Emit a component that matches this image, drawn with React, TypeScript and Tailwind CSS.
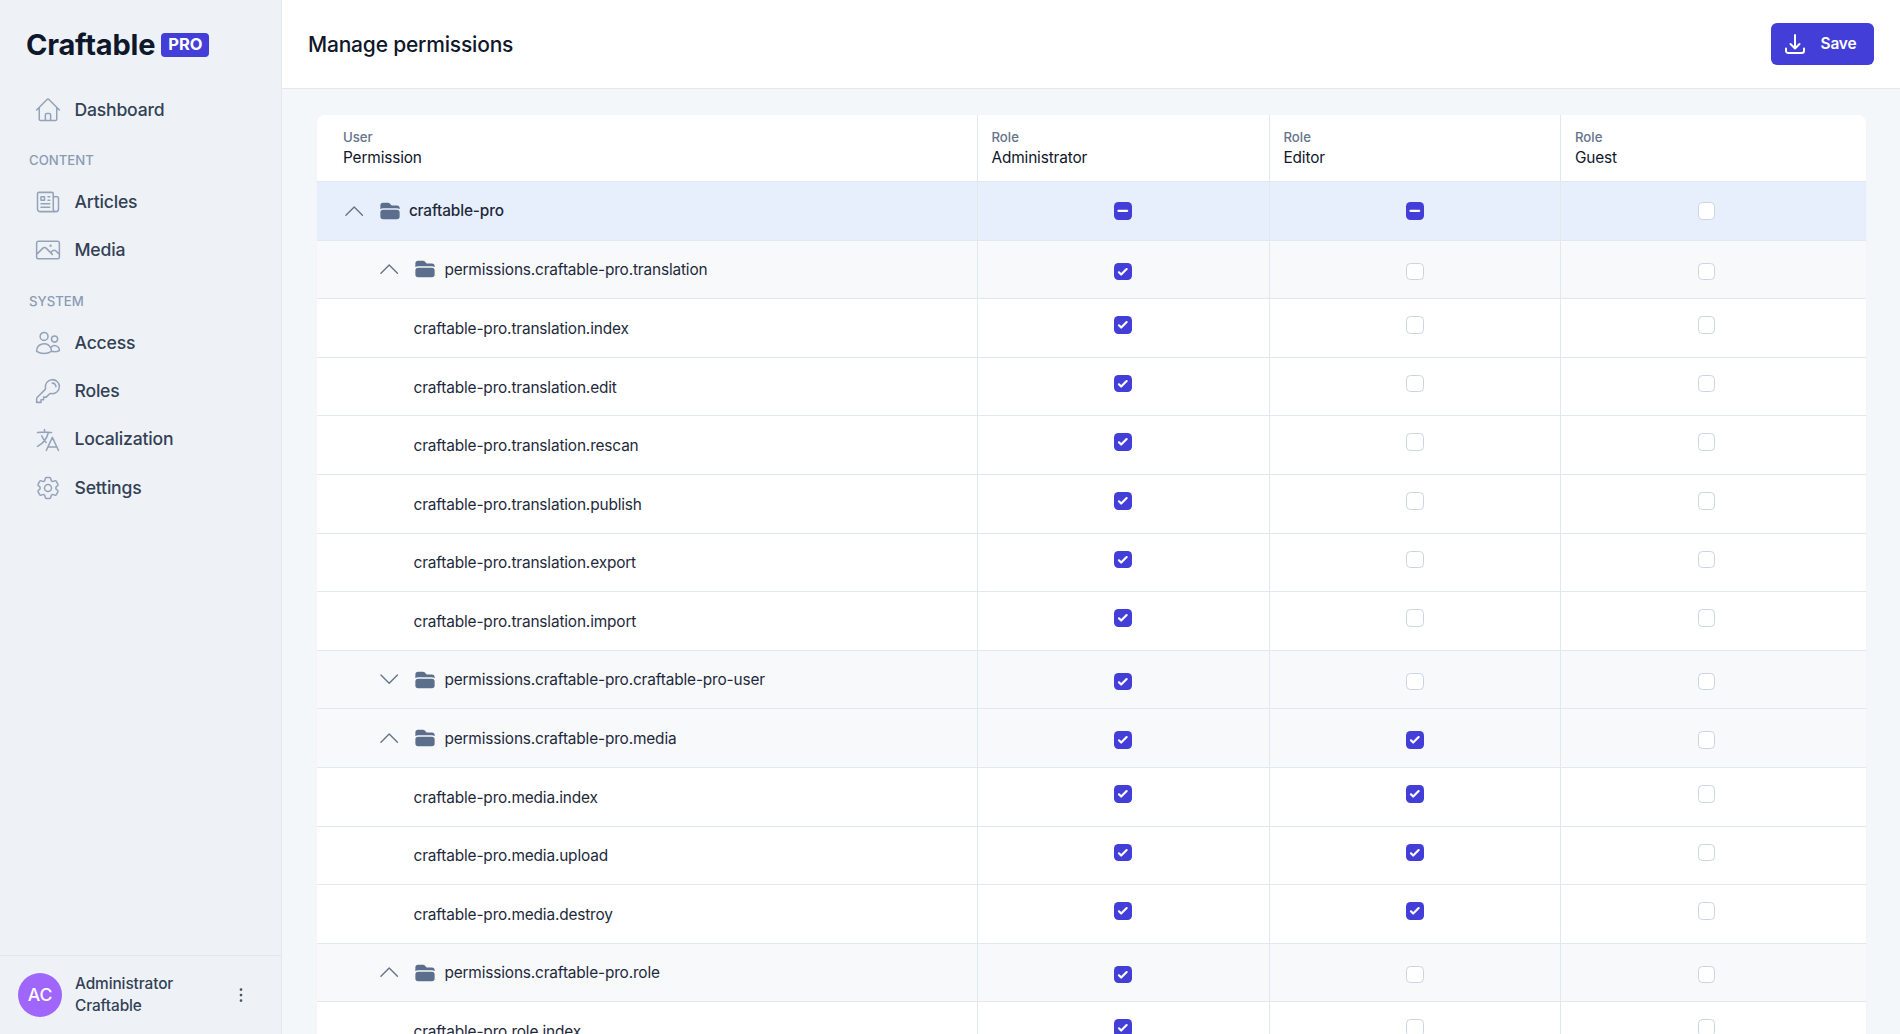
import {
  HiOutlineHome,
  HiOutlineNewspaper,
  HiOutlinePhoto,
  HiOutlineUsers,
  HiOutlineKey,
  HiOutlineLanguage,
  HiOutlineCog6Tooth,
  HiOutlineEllipsisVertical,
  HiOutlineChevronUp,
  HiOutlineChevronDown,
  HiOutlineArrowDownTray,
  HiFolder,
} from "react-icons/hi2"
import type { IconType } from "react-icons"

type Mark = "on" | "off" | "some"
type Row = {
  label: string
  kind: "root" | "group" | "leaf"
  closed?: boolean
  marks: Mark[]
}

const rows: Row[] = [
  { label: "craftable-pro", kind: "root", marks: ["some", "some", "off"] },
  { label: "permissions.craftable-pro.translation", kind: "group", marks: ["on", "off", "off"] },
  { label: "craftable-pro.translation.index", kind: "leaf", marks: ["on", "off", "off"] },
  { label: "craftable-pro.translation.edit", kind: "leaf", marks: ["on", "off", "off"] },
  { label: "craftable-pro.translation.rescan", kind: "leaf", marks: ["on", "off", "off"] },
  { label: "craftable-pro.translation.publish", kind: "leaf", marks: ["on", "off", "off"] },
  { label: "craftable-pro.translation.export", kind: "leaf", marks: ["on", "off", "off"] },
  { label: "craftable-pro.translation.import", kind: "leaf", marks: ["on", "off", "off"] },
  { label: "permissions.craftable-pro.craftable-pro-user", kind: "group", closed: true, marks: ["on", "off", "off"] },
  { label: "permissions.craftable-pro.media", kind: "group", marks: ["on", "on", "off"] },
  { label: "craftable-pro.media.index", kind: "leaf", marks: ["on", "on", "off"] },
  { label: "craftable-pro.media.upload", kind: "leaf", marks: ["on", "on", "off"] },
  { label: "craftable-pro.media.destroy", kind: "leaf", marks: ["on", "on", "off"] },
  { label: "permissions.craftable-pro.role", kind: "group", marks: ["on", "off", "off"] },
  { label: "craftable-pro.role.index", kind: "leaf", marks: ["on", "off", "off"] },
]

function NavItem({ icon: Icon, label }: { icon: IconType; label: string }) {
  return (
    <div className="flex h-[48.4px] items-center pl-[34px]">
      <Icon className="h-[28px] w-[28px] shrink-0 text-[#94a3b8]" style={{ strokeWidth: 1.3 }} />
      <span className="ml-[12.5px] text-[17.6px] font-medium tracking-[-0.2px] text-[#334155]">{label}</span>
    </div>
  )
}

function NavLabel({ children }: { children: string }) {
  return (
    <div className="flex h-[44px] items-end pb-[7px] pl-[29px] text-[13.2px] font-medium uppercase text-[#8a9bb3]">
      {children}
    </div>
  )
}

function Sidebar() {
  return (
    <aside className="flex h-full w-[282px] shrink-0 flex-col border-r border-[#e2e8f0] bg-[#eef2f7]">
      <div className="flex h-[85.5px] items-center pl-[26px] pt-[4px]">
        <span className="text-[29px] font-bold tracking-[-0.2px] text-[#0f172a]">Craftable</span>
        <span className="ml-[6px] flex h-[24px] w-[48px] items-center justify-center rounded-[4px] bg-[#443ed8] text-[16.5px] font-bold text-white">
          PRO
        </span>
      </div>
      <NavItem icon={HiOutlineHome} label="Dashboard" />
      <NavLabel>Content</NavLabel>
      <NavItem icon={HiOutlineNewspaper} label="Articles" />
      <NavItem icon={HiOutlinePhoto} label="Media" />
      <NavLabel>System</NavLabel>
      <NavItem icon={HiOutlineUsers} label="Access" />
      <NavItem icon={HiOutlineKey} label="Roles" />
      <NavItem icon={HiOutlineLanguage} label="Localization" />
      <NavItem icon={HiOutlineCog6Tooth} label="Settings" />
      <div className="mt-auto flex h-[79px] items-center border-t border-[#e2e8f0] pl-[18px] pr-[29px]">
        <div className="flex h-[44px] w-[44px] items-center justify-center rounded-full bg-[#a066fb] text-[17.6px] font-medium text-white">
          AC
        </div>
        <div className="ml-[13px] text-[15.4px] font-medium leading-[22px] tracking-[-0.1px] text-[#334155]">
          <div>Administrator</div>
          <div>Craftable</div>
        </div>
        <HiOutlineEllipsisVertical className="ml-auto h-[22px] w-[22px] text-[#475569]" />
      </div>
    </aside>
  )
}

function Checkbox({ mark }: { mark: Mark }) {
  if (mark === "off") {
    return <span className="inline-block h-[17.6px] w-[17.6px] rounded-[4.4px] border border-[#cbd5e1] bg-white" />
  }
  return (
    <span className="inline-block h-[17.6px] w-[17.6px] rounded-[4.4px] bg-[#443ed8]">
      <svg viewBox="0 0 16 16" className="h-full w-full" fill="white">
        {mark === "on" ? (
          <path d="M12.207 4.793a1 1 0 010 1.414l-5 5a1 1 0 01-1.414 0l-2-2a1 1 0 011.414-1.414L6.5 9.086l4.293-4.293a1 1 0 011.414 0z" />
        ) : (
          <path d="M4 8h8" stroke="white" strokeWidth="2" strokeLinecap="round" />
        )}
      </svg>
    </span>
  )
}

function PermissionRow({ row }: { row: Row }) {
  const Chevron = row.closed ? HiOutlineChevronDown : HiOutlineChevronUp
  const bg = row.kind === "root" ? "bg-[#e8effc]" : row.kind === "group" ? "bg-[#f7f9fb]" : "bg-white"
  const markPad = row.kind === "group" ? "pt-[4px]" : row.kind === "leaf" ? "pb-[6px]" : ""

  return (
    <tr className={`h-[58.6px] ${bg}`}>
      <td className="border-b border-r border-[#e2e8f0] p-0 text-[15.4px] tracking-[-0.15px] text-[#1e293b]">
        {row.kind === "leaf" ? (
          <div className="pl-[96.5px] pt-[1px]">{row.label}</div>
        ) : (
          <div className={`flex items-center ${row.kind === "root" ? "pl-[23.5px] font-medium" : "pl-[59px]"}`}>
            <Chevron className="h-[26.4px] w-[26.4px] shrink-0 text-[#64748b]" style={{ strokeWidth: 1.25 }} />
            <HiFolder className="ml-[12px] h-[22px] w-[22px] shrink-0 text-[#5b6e8c]" />
            <span className="ml-[8px]">{row.label}</span>
          </div>
        )}
      </td>
      {row.marks.map((mark, i) => (
        <td
          key={i}
          className={`border-b border-[#e2e8f0] p-0 text-center ${i < 2 ? "border-r" : "pr-[14px]"} ${markPad}`}
        >
          <div className="flex items-center justify-center">
            <Checkbox mark={mark} />
          </div>
        </td>
      ))}
    </tr>
  )
}

function HeadCell({ top, name, wide, last }: { top: string; name: string; wide?: boolean; last?: boolean }) {
  return (
    <th
      className={`border-b border-[#e2e8f0] p-0 text-left font-normal ${last ? "" : "border-r"} ${
        wide ? "pl-[26px]" : "pl-[14px]"
      }`}
    >
      <div className="text-[13.2px] font-medium leading-[20px] text-[#64748b]">{top}</div>
      <div className="text-[15.4px] leading-[22px] tracking-[-0.15px] text-[#0f172a]">{name}</div>
    </th>
  )
}

export default function App() {
  return (
    <div className="flex h-[1034px] overflow-hidden bg-[#f4f7fa] font-['Inter',sans-serif]">
      <Sidebar />
      <main className="flex min-w-0 flex-1 flex-col">
        <header className="flex h-[89px] shrink-0 items-center justify-between border-b border-[#e2e8f0] bg-white pl-[26px] pr-[26px]">
          <h1 className="pt-[1px] text-[21px] font-medium tracking-[-0.2px] text-[#0f172a]">Manage permissions</h1>
          <button className="flex h-[42px] w-[103px] items-center justify-center rounded-[6px] bg-[#443ed8] pr-[5px] text-[15.4px] font-semibold tracking-[-0.1px] text-white">
            <HiOutlineArrowDownTray className="mr-[13px] h-[24px] w-[24px]" style={{ strokeWidth: 2 }} />
            Save
          </button>
        </header>
        <div className="pl-[35px] pr-[34px] pt-[26px]">
          <div className="overflow-hidden rounded-t-[8px] bg-white shadow-[0_1px_2px_rgba(15,23,42,0.03)]">
            <table className="w-full table-fixed border-separate border-spacing-0">
              <colgroup>
                <col className="w-[660.5px]" />
                <col className="w-[292px]" />
                <col className="w-[291.5px]" />
                <col />
              </colgroup>
              <thead>
                <tr className="h-[67px]">
                  <HeadCell top="User" name="Permission" wide />
                  <HeadCell top="Role" name="Administrator" />
                  <HeadCell top="Role" name="Editor" />
                  <HeadCell top="Role" name="Guest" last />
                </tr>
              </thead>
              <tbody>
                {rows.map((row) => (
                  <PermissionRow key={row.label} row={row} />
                ))}
              </tbody>
            </table>
          </div>
        </div>
      </main>
    </div>
  )
}
